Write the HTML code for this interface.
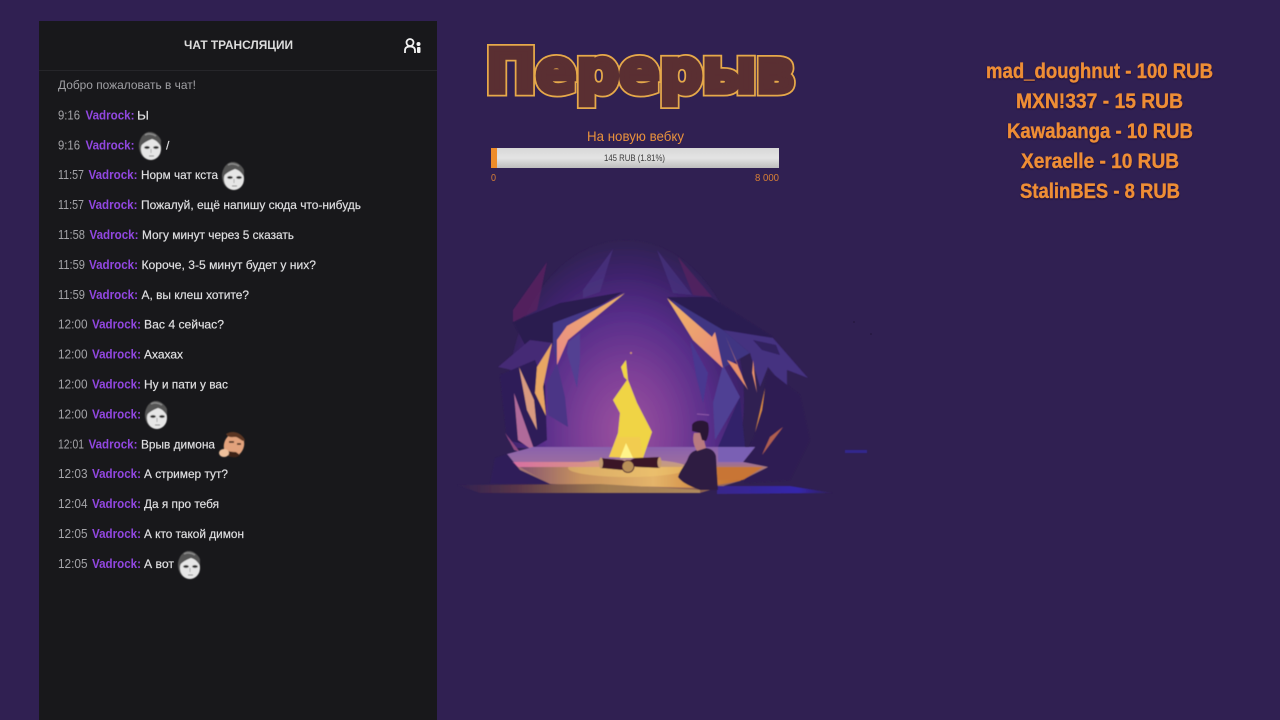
<!DOCTYPE html>
<html lang="ru"><head><meta charset="utf-8"><title>Перерыв</title>
<style>
html,body{margin:0;padding:0;width:1280px;height:720px;overflow:hidden;background:#302052}
svg{display:block}
text{font-family:"Liberation Sans",DejaVu Sans,sans-serif}
.t{fill:#a4a4a8;font-size:12.5px}
.n{fill:#9147e0;font-size:12.5px;font-weight:bold}
.m{fill:#dedee0;font-size:12px;stroke:#dedee0;stroke-width:.2px}
.d{fill:#ee8d35;font-size:21px;font-weight:bold;text-anchor:start;stroke:#ee8d35;stroke-width:.3px}
</style></head><body>
<svg width="1280" height="720" viewBox="0 0 1280 720" xmlns="http://www.w3.org/2000/svg">
<defs>
<filter id="b1" x="-10%" y="-10%" width="120%" height="120%"><feGaussianBlur stdDeviation=".6"/></filter>
<filter id="txt" x="-5%" y="-20%" width="110%" height="140%"><feGaussianBlur stdDeviation=".3"/></filter>
<filter id="fc" x="-10%" y="-10%" width="120%" height="120%"><feGaussianBlur stdDeviation=".5"/></filter>
<filter id="ds" x="-5%" y="-20%" width="110%" height="140%"><feDropShadow dx="0" dy="1" stdDeviation=".8" flood-color="#1a1030"/></filter>
<clipPath id="cave"><rect x="440" y="230" width="430" height="218"/></clipPath>
<radialGradient id="glow" cx=".5" cy=".6" r=".6"><stop offset="0" stop-color="#9c529e"/><stop offset=".3" stop-color="#7f4098"/><stop offset=".6" stop-color="#582e8a"/><stop offset=".85" stop-color="#3c2269"/><stop offset="1" stop-color="#302052"/></radialGradient>
<linearGradient id="gr" x1="0" y1="0" x2="0" y2="1"><stop offset="0" stop-color="#8a62ad"/><stop offset=".34" stop-color="#9c6da0"/><stop offset=".45" stop-color="#a97878"/><stop offset="1" stop-color="#8a5f4c"/></linearGradient>
<linearGradient id="or" x1="0" y1="0" x2="1" y2="0"><stop offset="0" stop-color="#855470"/><stop offset=".25" stop-color="#c8935e"/><stop offset=".55" stop-color="#e4b46a"/><stop offset=".8" stop-color="#cc8038"/><stop offset="1" stop-color="#b8622e"/></linearGradient>
<linearGradient id="bar" x1="0" y1="0" x2="0" y2="1"><stop offset="0" stop-color="#d8d8d8"/><stop offset=".5" stop-color="#e4e4e4"/><stop offset="1" stop-color="#bdbdbd"/></linearGradient>
<linearGradient id="spk" x1="1" y1="0" x2="0" y2="1"><stop offset="0" stop-color="#eeb666"/><stop offset="1" stop-color="#e98a86"/></linearGradient>
<linearGradient id="spr" x1="0" y1="0" x2="1" y2="1"><stop offset="0" stop-color="#eeb666"/><stop offset="1" stop-color="#e98a7a"/></linearGradient>
<linearGradient id="pnk" x1="0" y1="0" x2="1" y2="0"><stop offset="0" stop-color="#d86fa2"/><stop offset="1" stop-color="#d89a80"/></linearGradient>
<linearGradient id="blu" x1="0" y1="0" x2="1" y2="0"><stop offset="0" stop-color="#38288a"/><stop offset=".7" stop-color="#3526ac"/><stop offset="1" stop-color="#302052"/></linearGradient>
<linearGradient id="str" x1="0" y1="0" x2="1" y2="0"><stop offset="0" stop-color="#302052"/><stop offset=".25" stop-color="#5a3648"/><stop offset=".6" stop-color="#a07a50"/><stop offset="1" stop-color="#b08a5c"/></linearGradient>
<g id="face" filter="url(#fc)"><ellipse cx="0" cy="0" rx="11" ry="14" fill="#5e5e5e"/><ellipse cx="1" cy="3" rx="10" ry="11" fill="#e6e6e6"/><path d="M-10,1C-7,-3-3,-5 2,-7C6,-6 9,-3 11,1L11,-6C8,-12 3,-14 0,-14C-6,-14-11,-8-10,1Z" fill="#555"/><ellipse cx="-3" cy="1.500" rx="2.800" ry="1.400" fill="#2e2e2e"/><ellipse cx="6" cy="1.500" rx="2.800" ry="1.400" fill="#2e2e2e"/><path d="M1,3V7" stroke="#aaa" stroke-width="1"/><path d="M-1,10H4" stroke="#888" stroke-width="1"/><path d="M-5,-11C-2,-13 3,-12 6,-10" stroke="#8a8a8a" stroke-width="1.500" fill="none"/></g>
</defs>
<rect width="1280" height="720" fill="#302052"/>

<!-- chat panel -->
<rect x="39" y="21" width="398" height="699" fill="#18181b"/>
<rect x="39" y="70" width="398" height="1" fill="#26262a"/>
<g filter="url(#txt)">
<text x="184" y="49" font-size="12" font-weight="bold" fill="#dcdcdc" textLength="109" lengthAdjust="spacingAndGlyphs">ЧАТ ТРАНСЛЯЦИИ</text>
<text x="58" y="89" font-size="12" fill="#a0a0a4" textLength="138" lengthAdjust="spacingAndGlyphs">Добро пожаловать в чат!</text>

<text class="t" x="58" y="119.500" textLength="22" lengthAdjust="spacingAndGlyphs">9:16</text><text class="n" x="85.500" y="119.500" textLength="49" lengthAdjust="spacingAndGlyphs">Vadrock:</text><text class="m" x="137" y="119.500" textLength="12" lengthAdjust="spacingAndGlyphs">Ы</text>
<text class="t" x="58" y="149.500" textLength="22" lengthAdjust="spacingAndGlyphs">9:16</text><text class="n" x="85.500" y="149.500" textLength="49" lengthAdjust="spacingAndGlyphs">Vadrock:</text><text class="m" x="166" y="149.500">/</text>
<text class="t" x="58" y="179" textLength="26" lengthAdjust="spacingAndGlyphs">11:57</text><text class="n" x="88.500" y="179" textLength="49" lengthAdjust="spacingAndGlyphs">Vadrock:</text><text class="m" x="141" y="179" textLength="77" lengthAdjust="spacingAndGlyphs">Норм чат кста</text>
<text class="t" x="58" y="209" textLength="26" lengthAdjust="spacingAndGlyphs">11:57</text><text class="n" x="88.500" y="209" textLength="49" lengthAdjust="spacingAndGlyphs">Vadrock:</text><text class="m" x="141" y="209" textLength="220" lengthAdjust="spacingAndGlyphs">Пожалуй, ещё напишу сюда что-нибудь</text>
<text class="t" x="58" y="239" textLength="27" lengthAdjust="spacingAndGlyphs">11:58</text><text class="n" x="89.500" y="239" textLength="49" lengthAdjust="spacingAndGlyphs">Vadrock:</text><text class="m" x="142" y="239" textLength="152" lengthAdjust="spacingAndGlyphs">Могу минут через 5 сказать</text>
<text class="t" x="58" y="269" textLength="27" lengthAdjust="spacingAndGlyphs">11:59</text><text class="n" x="89" y="269" textLength="49" lengthAdjust="spacingAndGlyphs">Vadrock:</text><text class="m" x="141.500" y="269" textLength="174.500" lengthAdjust="spacingAndGlyphs">Короче, 3-5 минут будет у них?</text>
<text class="t" x="58" y="299" textLength="27" lengthAdjust="spacingAndGlyphs">11:59</text><text class="n" x="89" y="299" textLength="49" lengthAdjust="spacingAndGlyphs">Vadrock:</text><text class="m" x="141.500" y="299" textLength="107.500" lengthAdjust="spacingAndGlyphs">А, вы клеш хотите?</text>
<text class="t" x="58" y="328.500" textLength="29.500" lengthAdjust="spacingAndGlyphs">12:00</text><text class="n" x="92" y="328.500" textLength="49" lengthAdjust="spacingAndGlyphs">Vadrock:</text><text class="m" x="144" y="328.500" textLength="80" lengthAdjust="spacingAndGlyphs">Вас 4 сейчас?</text>
<text class="t" x="58" y="358.500" textLength="29.500" lengthAdjust="spacingAndGlyphs">12:00</text><text class="n" x="92" y="358.500" textLength="49" lengthAdjust="spacingAndGlyphs">Vadrock:</text><text class="m" x="144" y="358.500" textLength="39" lengthAdjust="spacingAndGlyphs">Ахахах</text>
<text class="t" x="58" y="388.500" textLength="29.500" lengthAdjust="spacingAndGlyphs">12:00</text><text class="n" x="92" y="388.500" textLength="49" lengthAdjust="spacingAndGlyphs">Vadrock:</text><text class="m" x="144" y="388.500" textLength="84" lengthAdjust="spacingAndGlyphs">Ну и пати у вас</text>
<text class="t" x="58" y="418.500" textLength="29.500" lengthAdjust="spacingAndGlyphs">12:00</text><text class="n" x="92" y="418.500" textLength="49" lengthAdjust="spacingAndGlyphs">Vadrock:</text>
<text class="t" x="58" y="448.500" textLength="26" lengthAdjust="spacingAndGlyphs">12:01</text><text class="n" x="88.500" y="448.500" textLength="49" lengthAdjust="spacingAndGlyphs">Vadrock:</text><text class="m" x="141" y="448.500" textLength="74" lengthAdjust="spacingAndGlyphs">Врыв димона</text>
<text class="t" x="58" y="478" textLength="29.500" lengthAdjust="spacingAndGlyphs">12:03</text><text class="n" x="92" y="478" textLength="49" lengthAdjust="spacingAndGlyphs">Vadrock:</text><text class="m" x="144" y="478" textLength="84" lengthAdjust="spacingAndGlyphs">А стример тут?</text>
<text class="t" x="58" y="508" textLength="29.500" lengthAdjust="spacingAndGlyphs">12:04</text><text class="n" x="92" y="508" textLength="49" lengthAdjust="spacingAndGlyphs">Vadrock:</text><text class="m" x="144" y="508" textLength="75" lengthAdjust="spacingAndGlyphs">Да я про тебя</text>
<text class="t" x="58" y="538" textLength="29.500" lengthAdjust="spacingAndGlyphs">12:05</text><text class="n" x="92" y="538" textLength="49" lengthAdjust="spacingAndGlyphs">Vadrock:</text><text class="m" x="144" y="538" textLength="100" lengthAdjust="spacingAndGlyphs">А кто такой димон</text>
<text class="t" x="58" y="568" textLength="29.500" lengthAdjust="spacingAndGlyphs">12:05</text><text class="n" x="92" y="568" textLength="49" lengthAdjust="spacingAndGlyphs">Vadrock:</text><text class="m" x="144" y="568" textLength="30" lengthAdjust="spacingAndGlyphs">А вот</text>
</g>
<!-- users icon -->
<g fill="none" stroke="#f2f2f2" stroke-width="1.800">
<circle cx="410" cy="42.500" r="3.500"/>
<path d="M405,53V50.500C405,47.500 407,46.500 410,46.500C413,46.500 415,47.500 415,50.500V53"/>
</g>
<circle cx="418.500" cy="44" r="2" fill="#f2f2f2"/><rect x="417" y="47" width="3.500" height="6" rx="1" fill="#f2f2f2"/>
<!-- emotes -->
<use href="#face" x="150" y="146"/>
<use href="#face" x="233" y="176"/>
<use href="#face" x="156" y="415"/>
<use href="#face" x="189" y="565"/>
<g filter="url(#fc)">
<ellipse cx="234" cy="445" rx="10" ry="12" fill="#e2a27c" transform="rotate(20 234 445)"/>
<path d="M226,434C232,430 241,432 245,440C243,443 240,438 236,437C232,437 228,438 226,434Z" fill="#5a3524"/>
<path d="M223,450C228,458 236,459 240,455L236,452C232,452 227,451 223,450Z" fill="#3c2418"/>
<ellipse cx="224" cy="453" rx="5" ry="4" fill="#eec09c"/>
<path d="M229,442H234M237,444H241" stroke="#30180e" stroke-width="1.500"/>
</g>

<!-- title -->
<text x="486" y="92" font-size="60" font-weight="bold" style="font-family:'DejaVu Sans',sans-serif" fill="#5a2f32" stroke="#e6a94a" stroke-width="9" stroke-linejoin="miter" textLength="308" lengthAdjust="spacingAndGlyphs">Перерыв</text>
<text x="486" y="92" font-size="60" font-weight="bold" style="font-family:'DejaVu Sans',sans-serif" fill="#5a2f32" stroke="#5a2f32" stroke-width="5.500" stroke-linejoin="miter" textLength="308" lengthAdjust="spacingAndGlyphs">Перерыв</text>

<!-- goal -->
<g filter="url(#txt)">
<text x="587" y="141" font-size="14" fill="#e8913c" textLength="97" lengthAdjust="spacingAndGlyphs">На новую вебку</text>
<rect x="491" y="148" width="288" height="20" fill="url(#bar)"/>
<rect x="491" y="148" width="6" height="20" fill="#ee8c2c"/>
<text x="604" y="161" font-size="9" fill="#3a3a3a" textLength="61" lengthAdjust="spacingAndGlyphs">145 RUB (1.81%)</text>
<text x="491" y="181" font-size="10" fill="#d97f35" textLength="5" lengthAdjust="spacingAndGlyphs">0</text>
<text x="755" y="181" font-size="10" fill="#d97f35" textLength="24" lengthAdjust="spacingAndGlyphs">8 000</text>
</g>

<!-- donors -->
<g filter="url(#ds)">
<text class="d" x="986" y="78" textLength="227" lengthAdjust="spacingAndGlyphs">mad_doughnut - 100 RUB</text>
<text class="d" x="1016" y="108" textLength="167" lengthAdjust="spacingAndGlyphs">MXN!337 - 15 RUB</text>
<text class="d" x="1007" y="138" textLength="186" lengthAdjust="spacingAndGlyphs">Kawabanga - 10 RUB</text>
<text class="d" x="1021" y="168" textLength="158" lengthAdjust="spacingAndGlyphs">Xeraelle - 10 RUB</text>
<text class="d" x="1020" y="198" textLength="160" lengthAdjust="spacingAndGlyphs">StalinBES - 8 RUB</text>
</g>

<!-- scene -->
<g filter="url(#b1)">
<g clip-path="url(#cave)"><ellipse cx="626" cy="400" rx="118" ry="160" fill="url(#glow)"/></g>
<!-- faint top shards -->
<polygon points="613,249 583,290 583,298 600,292" fill="#4a3480" opacity=".75"/>
<polygon points="547,262 513,310 513,322 537,310" fill="#5a2060" opacity=".8"/>
<polygon points="657,250 673,293 692,295" fill="#47347e" opacity=".75"/>
<polygon points="678,257 712,297 693,295" fill="#56205f" opacity=".8"/>
<!-- left cave rock -->
<polygon points="623,292 560,303 513,322 525,345 553,345 575,320" fill="#2a1b50"/>
<polygon points="498,367 530,340 553,343 547,353 525,373" fill="#452a74"/>
<polygon points="553,323 620,298 570,330 557,365 553,345" fill="#453787"/>
<polygon points="568,342 580,333 580,360 577,388 567,353" fill="#523f92"/>
<polygon points="547,383 557,363 565,397 568,427 548,415" fill="#4b3586"/>
<polygon points="500,375 535,360 545,385 547,440 535,447 507,440" fill="#2d1d58"/>
<polygon points="625,293 567,326 557,340 557,365 568,340" fill="url(#spk)"/>
<polygon points="552,343 537,367 535,393 546,416 543,387" fill="#e8a664"/>
<polygon points="519,367 534,400 537,430 527,410" fill="#d89a80"/>
<polygon points="514,393 535,452 518,440" fill="#b06a9a"/>
<polygon points="505,433 520,452 514,450" fill="#8d4a80"/>
<polygon points="535,448 560,452 537,454" fill="#2b1c58"/>
<!-- right cave rock -->
<polygon points="667,297 710,297 773,337 730,335 700,320" fill="#2a1b51"/>
<polygon points="672,300 723,330 750,353 723,368 693,340" fill="#3f3682"/>
<polygon points="723,330 773,338 808,378 787,370 787,390 768,367 760,387 750,353" fill="#453080"/>
<polygon points="753,340 776,345 780,355 762,350" fill="#33205f"/>
<polygon points="690,340 708,373 703,403 696,375" fill="#483790"/>
<polygon points="723,365 740,397 715,440 713,403" fill="#4f4094"/>
<polygon points="740,397 745,447 718,447" fill="#33246a"/>
<polygon points="667,298 712,337 715,332 723,368 693,340" fill="url(#spr)"/>
<polygon points="725,335 748,390 727,360 738,365" fill="#e8906a"/>
<polygon points="753,360 757,393 752,373" fill="#e8906a"/>
<polygon points="768,370 800,395 810,440 790,480 745,483 742,462 755,435" fill="#2d1d52"/>
<polygon points="765,388 755,432 762,410" fill="#dc8c40"/>
<polygon points="783,427 762,455 770,437" fill="#b05f50"/>
<!-- ground -->
<polygon points="533,447 755,447 743,462 768,467 740,481 700,493 550,484 520,470 507,454" fill="url(#gr)"/>
<polygon points="520,467 763,467 740,481 700,488 550,484" fill="url(#or)"/>
<ellipse cx="628" cy="468" rx="60" ry="9" fill="#f1cc72" opacity=".45"/>
<polygon points="512,462 600,462 600,467 518,467" fill="url(#pnk)"/>
<polygon points="718,447 755,447 743,462 718,462" fill="#7a60b4"/>
<polygon points="718,467 763,467 743,480 718,480" fill="#c87434"/>
<polygon points="507,454 520,470 550,484 490,484 495,458" fill="#2e1e5c" opacity=".7"/>
<polygon points="457,485 600,484 700,490 700,493 480,493" fill="url(#str)"/>
<polygon points="717,486 790,486 833,493 717,494" fill="url(#blu)"/>
<rect x="845" y="450" width="22" height="3" fill="#3326a8" opacity=".7"/>
<circle cx="631" cy="353" r="1" fill="#d89a70"/>
<!-- fire -->
<polygon points="626,360 621,367 624,377 627,380 613,400 620,413 618,433 609,457 643,458 652,432 637,403 628,380" fill="#f0d444"/>
<polygon points="609,457 617,437 640,437 643,458" fill="#f2cc50"/>
<polygon points="626,443 620,458 633,458" fill="#fff48a"/>
<!-- logs -->
<polygon points="600,458 622,460 635,465 622,470 600,468" fill="#3a1728"/>
<polygon points="660,457 635,458 622,464 637,467 660,468" fill="#3a1728"/>
<ellipse cx="601" cy="463" rx="2" ry="5.500" fill="#c39a70"/>
<ellipse cx="659.500" cy="462.500" rx="2" ry="5.500" fill="#c39a70"/>
<circle cx="628" cy="466.500" r="6" fill="#b89058" stroke="#4a2030" stroke-width="1"/>
<!-- person -->
<path d="M697,450C705,446 714,448 716,456L718,490L700,490C692,487 682,483 678,477C680,470 686,464 688,458C690,453 693,451 697,450Z" fill="#2d1b42"/>
<path d="M694,433L702,433L706,448L697,451C694,446 692,440 694,433Z" fill="#b87a80"/>
<path d="M692,425C694,420 704,419 708,423C710,430 708,438 706,441L702,440L700,433L692,431Z" fill="#2a1836"/>
<path d="M697,414L709,415" stroke="#8f5aa8" stroke-width="1" fill="none"/>
</g>
<circle cx="854" cy="322" r=".8" fill="#201438"/><circle cx="871" cy="334" r=".8" fill="#201438"/>
</svg>
</body></html>
